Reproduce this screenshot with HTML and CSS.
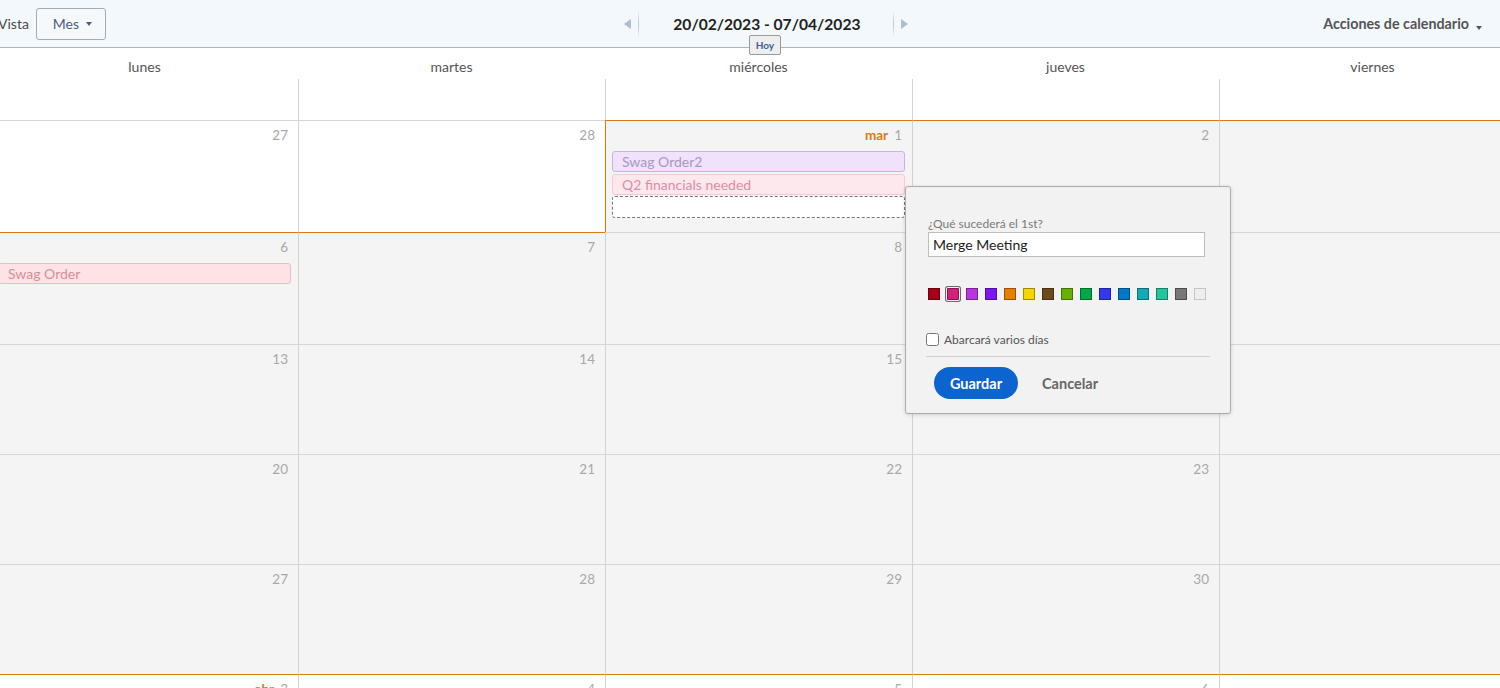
FILE: index.html
```html
<!DOCTYPE html>
<html lang="es">
<head>
<meta charset="utf-8">
<title>Calendario</title>
<link rel="stylesheet" href="styles.css">
</head>
<body>
<div class="toolbar">
  <div class="view">
    <span class="view-label">Vista</span>
    <button class="view-btn">Mes <span class="caret"></span></button>
  </div>
  <div class="nav">
    <span class="arrow arrow-left"></span>
    <span class="sep"></span>
    <div class="range">20/02/2023 - 07/04/2023<button class="today">Hoy</button></div>
    <span class="sep"></span>
    <span class="arrow arrow-right"></span>
  </div>
  <div class="actions">Acciones de calendario <span class="caret caret-dark"></span></div>
</div>

<div class="calendar">
  <div class="dow">
    <div>lunes</div><div>martes</div><div>miércoles</div><div>jueves</div><div>viernes</div>
  </div>
  <div class="week week-partial">
    <div class="cell"></div><div class="cell"></div><div class="cell"></div><div class="cell"></div><div class="cell"></div>
  </div>
  <div class="week week-tall">
    <div class="cell"><div class="num">27</div></div>
    <div class="cell"><div class="num">28</div></div>
    <div class="cell cur first-top first-left"><div class="num"><span class="mon">mar</span>1</div>
      <div class="events">
        <div class="event ev-purple">Swag Order2</div>
        <div class="event ev-pink">Q2 financials needed</div>
        <div class="event ev-new"></div>
      </div>
    </div>
    <div class="cell cur first-top"><div class="num">2</div></div>
    <div class="cell cur first-top"><div class="num">3</div></div>
  </div>
  <div class="week week-tall">
    <div class="cell cur first-top"><div class="num">6</div>
      <div class="events"><div class="event ev-red">Swag Order</div></div>
    </div>
    <div class="cell cur first-top"><div class="num">7</div></div>
    <div class="cell cur"><div class="num">8</div></div>
    <div class="cell cur"><div class="num">9</div></div>
    <div class="cell cur"><div class="num">10</div></div>
  </div>
  <div class="week">
    <div class="cell cur"><div class="num">13</div></div>
    <div class="cell cur"><div class="num">14</div></div>
    <div class="cell cur"><div class="num">15</div></div>
    <div class="cell cur"><div class="num">16</div></div>
    <div class="cell cur"><div class="num">17</div></div>
  </div>
  <div class="week">
    <div class="cell cur"><div class="num">20</div></div>
    <div class="cell cur"><div class="num">21</div></div>
    <div class="cell cur"><div class="num">22</div></div>
    <div class="cell cur"><div class="num">23</div></div>
    <div class="cell cur"><div class="num">24</div></div>
  </div>
  <div class="week">
    <div class="cell cur"><div class="num">27</div></div>
    <div class="cell cur"><div class="num">28</div></div>
    <div class="cell cur"><div class="num">29</div></div>
    <div class="cell cur"><div class="num">30</div></div>
    <div class="cell cur"><div class="num">31</div></div>
  </div>
  <div class="week week-last">
    <div class="cell first-top"><div class="num"><span class="mon">abr</span>3</div></div>
    <div class="cell first-top"><div class="num">4</div></div>
    <div class="cell first-top"><div class="num">5</div></div>
    <div class="cell first-top"><div class="num">6</div></div>
    <div class="cell first-top"><div class="num">7</div></div>
  </div>
</div>

<div class="popover">
  <label class="pop-label">¿Qué sucederá el 1st?</label>
  <input class="pop-input" type="text" value="Merge Meeting">
  <div class="swatches">
    <span class="sw" style="background:#a50016"></span>
    <span class="sw sw-sel" style="background:#d42178"></span>
    <span class="sw" style="background:#b935de"></span>
    <span class="sw" style="background:#7c16f2"></span>
    <span class="sw" style="background:#e68000"></span>
    <span class="sw" style="background:#f7d600"></span>
    <span class="sw" style="background:#6d4a1c"></span>
    <span class="sw" style="background:#66b103"></span>
    <span class="sw" style="background:#00a847"></span>
    <span class="sw" style="background:#3437ec"></span>
    <span class="sw" style="background:#0079c8"></span>
    <span class="sw" style="background:#14a9b3"></span>
    <span class="sw" style="background:#25c49c"></span>
    <span class="sw" style="background:#777777"></span>
    <span class="sw" style="background:#eeeeee"></span>
  </div>
  <label class="multi"><input type="checkbox" class="chk"> Abarcará varios días</label>
  <div class="pop-divider"></div>
  <div class="pop-actions">
    <button class="btn-save">Guardar</button>
    <button class="btn-cancel">Cancelar</button>
  </div>
</div>
</body>
</html>
```

FILE: styles.css
```css
* { box-sizing: border-box; }
html, body { margin: 0; padding: 0; }
body {
  width: 1500px;
  height: 688px;
  overflow: hidden;
  position: relative;
  font-family: "Lato", "Liberation Sans", sans-serif;
  color: #444;
  background: #fff;
}
button { font-family: inherit; }

.toolbar {
  height: 48px;
  background: #f3f8fc;
  border-bottom: 1px solid #a9b5c1;
  display: flex;
  align-items: center;
  position: relative;
}
.view {
  display: flex;
  align-items: center;
  margin-left: -2px;
  gap: 7px;
}
.view-label { font-size: 14px; color: #4a4a4a; }
.view-btn {
  width: 70px;
  height: 32px;
  border: 1px solid #a2acb7;
  border-radius: 3px;
  background: #f6f9fc;
  color: #4d5d80;
  font-size: 14px;
  display: flex;
  align-items: center;
  justify-content: center;
  gap: 7px;
  padding: 0 0 0 3px;
}
.caret {
  width: 0; height: 0;
  border-left: 3.5px solid transparent;
  border-right: 3.5px solid transparent;
  border-top: 4px solid #4d5d80;
  display: inline-block;
}
.caret-dark { border-top-color: #555; margin-left: 7px; margin-top: 8px; }

.nav {
  display: flex;
  align-items: center;
  margin-left: 518px;
  height: 100%;
}
.arrow {
  width: 0; height: 0;
  border-top: 5px solid transparent;
  border-bottom: 5px solid transparent;
}
.arrow-left { border-right: 7px solid #aebccb; margin-right: 7px; }
.arrow-right { border-left: 7px solid #aebccb; margin-left: 7px; }
.sep {
  width: 1px;
  height: 28px;
  background: linear-gradient(#f3f8fc, #c4ced8 40%, #c4ced8 60%, #f3f8fc);
}
.range {
  position: relative;
  width: 254px;
  text-align: center;
  font-size: 15.6px;
  font-weight: 700;
  color: #222;
  padding-left: 2px;
}
.today {
  position: absolute;
  left: 50%;
  top: 20px;
  transform: translateX(-50%);
  margin-left: -1px;
  width: 32px;
  height: 20px;
  padding: 0;
  background: #eeeeee;
  border: 1px solid #9a9a9a;
  border-radius: 2px;
  color: #3f5f9c;
  font-size: 10px;
  font-weight: 700;
  z-index: 2;
}
.actions {
  margin-left: auto;
  margin-right: 18px;
  font-size: 14.3px;
  font-weight: 700;
  color: #555;
  display: flex;
  align-items: center;
}

.calendar {
  width: 1535px;
  margin-left: -9px;
}
.dow {
  display: grid;
  grid-template-columns: repeat(5, 307px);
  height: 31px;
  padding-top: 11px;
  text-align: center;
  font-size: 14px;
  line-height: 16px;
  color: #555;
}
.week {
  display: grid;
  grid-template-columns: repeat(5, 307px);
  height: 110px;
}
.week-tall { height: 112px; }
.week-partial { height: 41px; }
.cell {
  border-top: 1px solid #d6d6d6;
  border-left: 1px solid #d3d3d3;
  background: #fff;
  position: relative;
}
.cell:first-child { border-left-color: transparent; }
.week-partial .cell { border-top: none; }
.cell.cur { background: #f4f4f4; }
.cell.first-top { border-top-color: #dc7a10; }
.cell.first-left { border-left-color: #dc7a10; }
.num {
  text-align: right;
  padding: 7px 10px 0 0;
  font-size: 13.5px;
  line-height: 15px;
  color: #a8a8a8;
}
.mon {
  color: #dc7a10;
  font-weight: 700;
  margin-right: 6px;
}
.events {
  margin: 8px 7px 0 6px;
  display: flex;
  flex-direction: column;
  gap: 2px;
}
.event {
  height: 21px;
  border: 1px solid;
  border-radius: 3px;
  padding-left: 9px;
  font-size: 14px;
  line-height: 19px;
}
.ev-purple { background: #f0e2fb; border-color: #c7b4de; color: #a896c6; }
.ev-pink { background: #fde8ee; border-color: #f6c8d5; color: #e08ca7; }
.ev-new { background: #fff; border: 1px dashed #777; margin-top: -1px; height: 22px; }
.ev-red { background: #fde3e5; border-color: #f1babf; color: #d78f97; }

.popover {
  position: absolute;
  left: 905px;
  top: 186px;
  width: 326px;
  height: 228px;
  background: #f2f2f2;
  border: 1px solid #ababab;
  border-radius: 3px;
  box-shadow: 0 1px 4px rgba(0,0,0,0.15);
  padding: 29px 20px 0 20px;
  display: flex;
  flex-direction: column;
}
.pop-label {
  margin-left: 2px;
  font-size: 12px;
  color: #7a7a7a;
  line-height: 15px;
}
.pop-input {
  margin: 1px 0 0 2px;
  width: 277px;
  height: 25px;
  border: 1px solid #bdbdbd;
  background: #fff;
  font-family: inherit;
  font-size: 14px;
  color: #222;
  padding: 0 4px;
  outline: none;
}
.swatches {
  display: flex;
  gap: 7px;
  margin: 31px 0 0 2px;
  align-items: center;
}
.sw {
  width: 12px;
  height: 12px;
  border: 1px solid rgba(0,0,0,0.35);
}
.sw:last-child { border-color: #c4c4c4; }
.sw-sel {
  box-shadow: 0 0 0 1px #f2f2f2, 0 0 0 2px #6a6a6a;
  border-radius: 1px;
}
.multi {
  display: flex;
  align-items: center;
  gap: 5px;
  margin-top: 32px;
  font-size: 12px;
  color: #555;
}
.chk {
  margin: 0;
  width: 13px;
  height: 13px;
}
.pop-divider {
  height: 1px;
  background: #cfcfcf;
  margin-top: 9px;
}
.pop-actions {
  display: flex;
  align-items: center;
  margin-top: 10px;
  padding-left: 8px;
  gap: 24px;
}
.btn-save {
  width: 84px;
  height: 32px;
  border: none;
  border-radius: 16px;
  background: #0c64cf;
  color: #fff;
  font-size: 14.5px;
  font-weight: 700;
}
.btn-cancel {
  border: none;
  background: none;
  padding: 0;
  color: #666;
  font-size: 14.5px;
  font-weight: 700;
}
```
